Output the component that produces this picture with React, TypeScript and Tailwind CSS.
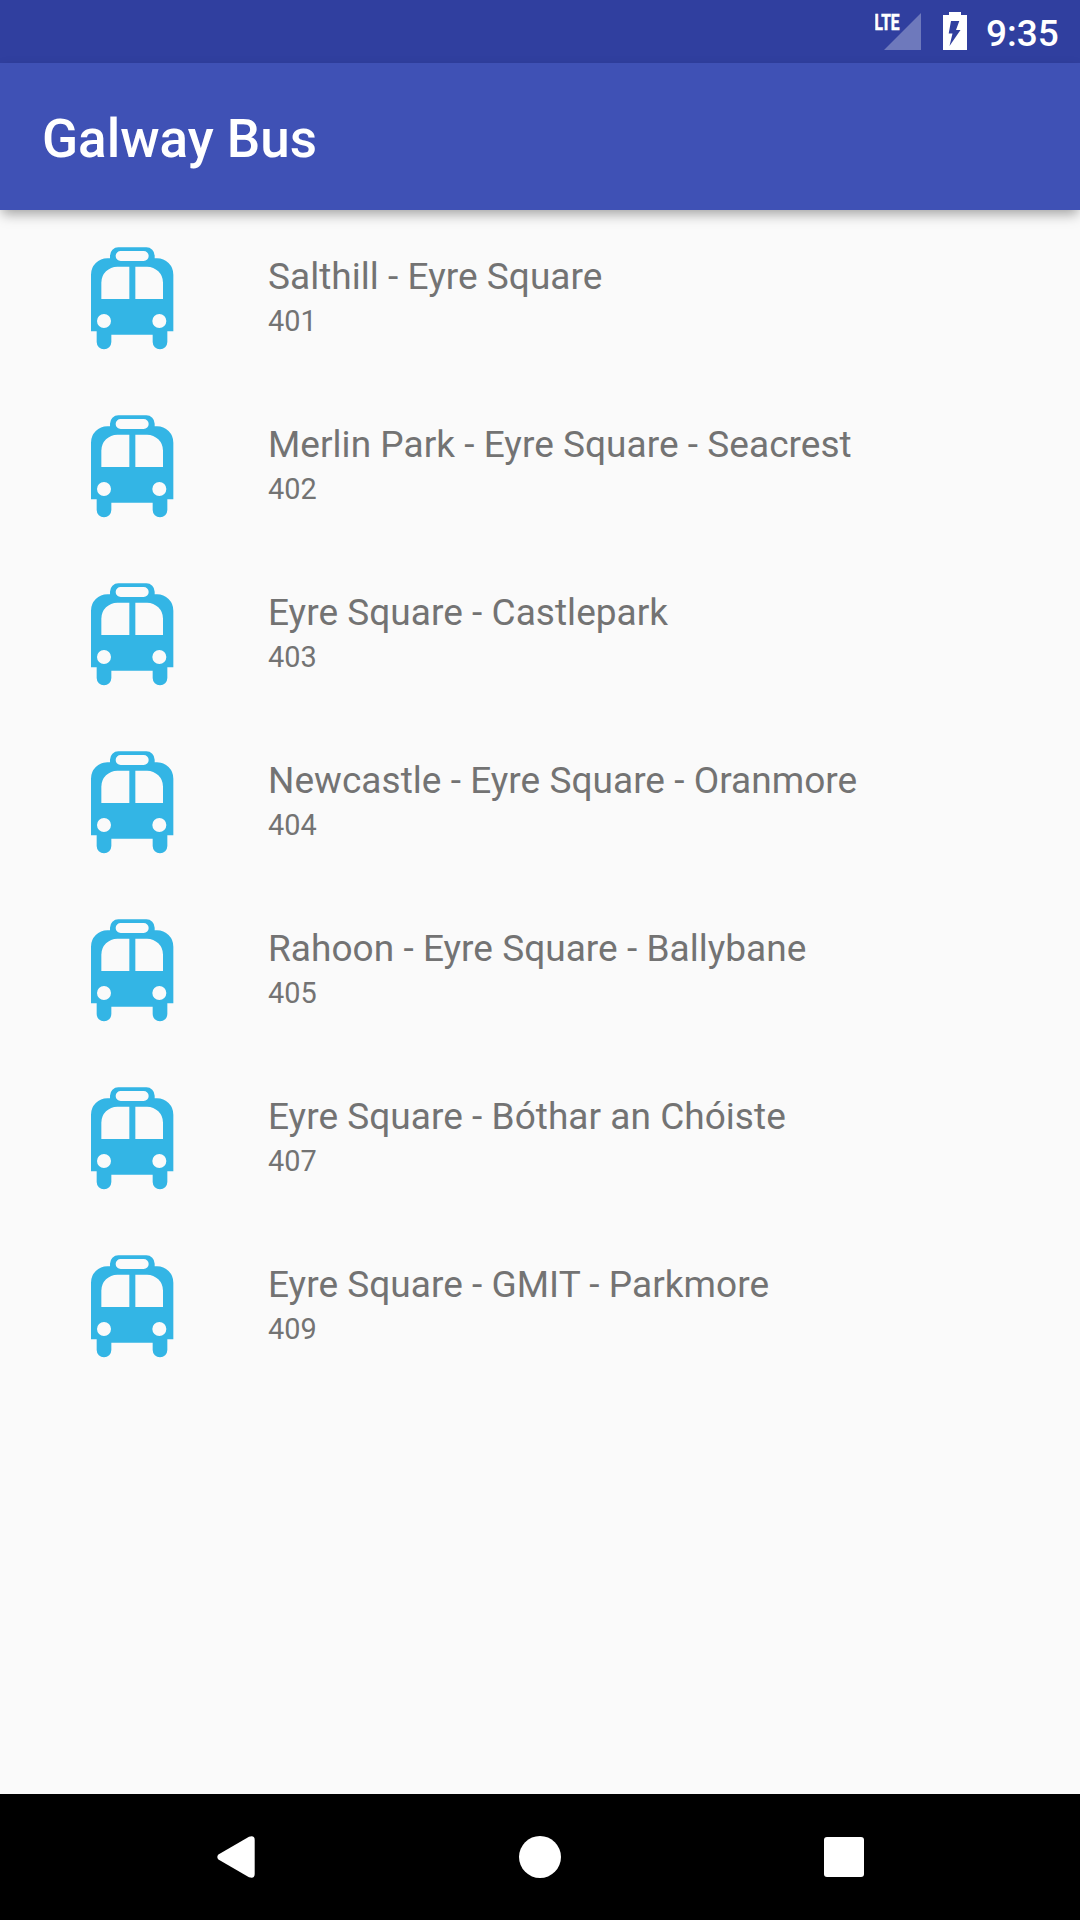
const routes = [
  { name: "Salthill - Eyre Square", number: "401" },
  { name: "Merlin Park - Eyre Square - Seacrest", number: "402" },
  { name: "Eyre Square - Castlepark", number: "403" },
  { name: "Newcastle - Eyre Square - Oranmore", number: "404" },
  { name: "Rahoon - Eyre Square - Ballybane", number: "405" },
  { name: "Eyre Square - Bóthar an Chóiste", number: "407" },
  { name: "Eyre Square - GMIT - Parkmore", number: "409" },
];

function BusIcon() {
  return (
    <svg viewBox="0 0 312 372" className="h-[124px] w-[104px] shrink-0" fill="#33b5e5">
      <path
        fillRule="evenodd"
        d="M33 286V116A49 49 0 0 1 82 67H90V59A25 25 0 0 1 115 34H199A25 25 0 0 1 224 59V67H231A49 49 0 0 1 280 116V286H262V318A22 22 0 0 1 218 318V296H94V318A22 22 0 0 1 50 318V286Z
        M122 45A15 15 0 0 0 122 75H191A15 15 0 0 0 191 45Z
        M148 92H112A48 48 0 0 0 64 140V189H148Z
        M166 92H201A48 48 0 0 1 249 140V189H166Z
        M72 234A21 21 0 1 0 72 276A21 21 0 1 0 72 234Z
        M238 234A21 21 0 1 0 238 276A21 21 0 1 0 238 234Z"
      />
    </svg>
  );
}

function StatusBar() {
  return (
    <header className="flex h-[63px] items-start justify-end bg-[#303f9f] pr-[21px] text-white">
      <svg viewBox="0 0 50 63" className="mr-[18px] h-[63px] w-[50px]">
        <path d="M9 50L46 13V50Z" fill="#fff" fillOpacity="0.3" />
        <text
          x="-0.5"
          y="29.5"
          fill="#fff"
          stroke="#fff"
          strokeWidth="0.6"
          fontFamily="Roboto, sans-serif"
          fontWeight="700"
          fontSize="21.5"
          textLength="25"
          lengthAdjust="spacingAndGlyphs"
        >
          LTE
        </text>
      </svg>
      <svg viewBox="0 0 24 63" className="mr-[19px] h-[63px] w-6" fill="#fff">
        <path
          fillRule="evenodd"
          d="M6 12H18V15H24V50H0V15H6ZM8 21L5.7 33.5H9.5L6.5 46L17.5 30H13L16.3 21Z"
        />
      </svg>
      <span className="w-[73px] pt-[12px] text-[37px] leading-[44px] font-medium">9:35</span>
    </header>
  );
}

function NavigationBar() {
  return (
    <nav className="flex h-[126px] items-center justify-between bg-black pr-[216px] pl-[217px]">
      <svg viewBox="0 0 38 42" className="h-[42px] w-[38px]" fill="#fff">
        <path d="M1.4 18.6L32 .8Q37.7-1 37.7 4V38Q37.7 43 32 41.2L1.4 23.4Q-.8 21 1.4 18.6Z" />
      </svg>
      <div className="h-[42px] w-[42px] rounded-full bg-white" />
      <div className="h-10 w-10 rounded-[3px] bg-white" />
    </nav>
  );
}

export default function App() {
  return (
    <div className="flex h-[1920px] w-[1080px] flex-col overflow-hidden bg-[#fafafa] font-[Roboto,sans-serif]">
      <StatusBar />
      <div className="z-10 flex h-[147px] items-center bg-[#3f51b5] px-[42px] shadow-[0_6px_12px_-2px_rgba(0,0,0,0.36)]">
        <h1 className="pt-[5px] text-[53px] leading-[62px] font-medium text-white">Galway Bus</h1>
      </div>
      <main className="flex-1 pt-[26px]">
        <ul>
          {routes.map((route) => (
            <li key={route.number} className="flex h-[168px] items-start pl-20 text-[#737373]">
              <BusIcon />
              <div className="pt-[19px] pl-[84px]">
                <p className="text-[37px] leading-[44px] tracking-[0.04px]">{route.name}</p>
                <p className="text-[28.875px] leading-[44px]">{route.number}</p>
              </div>
            </li>
          ))}
        </ul>
      </main>
      <NavigationBar />
    </div>
  );
}
